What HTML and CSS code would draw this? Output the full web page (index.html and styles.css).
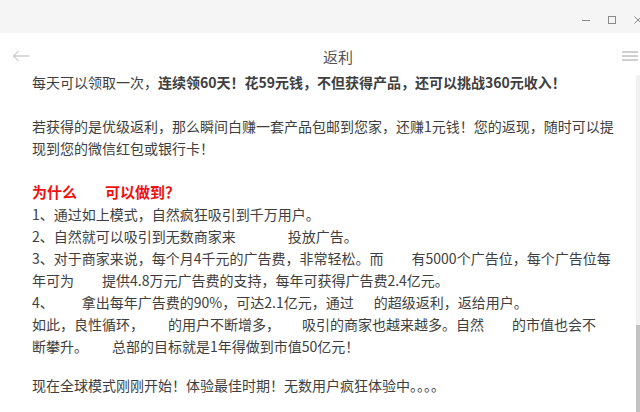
FILE: index.html
```html
<!doctype html>
<html lang="zh-CN">

<head>
  <meta charset="UTF-8" />
  <meta name="viewport" content="width=device-width, initial-scale=1.0" />
  <title>返利</title>
  <link rel="stylesheet" href="styles.css">
</head>

<body>
  <div class="window">
    <div class="titlebar">
      <div class="controls">
        <svg class="ctl" width="10" height="10" viewBox="0 0 10 10"><path d="M1 5.5h8" /></svg>
        <svg class="ctl" width="10" height="10" viewBox="0 0 10 10"><rect x="1.5" y="1.5" width="7" height="7" /></svg>
        <svg class="ctl" width="10" height="10" viewBox="0 0 10 10"><path d="M1.5 1.5l7 7M8.5 1.5l-7 7" /></svg>
      </div>
    </div>

    <div class="navbar">
      <div class="nav-back">
        <svg width="18" height="12" viewBox="0 0 18 12"><path d="M17.5 6H1.5M6.5 1L1.5 6l5 5" /></svg>
      </div>
      <div class="nav-title"> 返利 </div>
      <div class="nav-menu">
        <svg width="16" height="10" viewBox="0 0 16 10"><path d="M0 1h16M0 5h16M0 9h16" /></svg>
      </div>
    </div>

    <div class="main">
      <div class="article">
        <p>每天可以领取一次，<b>连续领60天！花59元钱，不但获得产品，还可以挑战360元收入！</b></p>

        <p>若获得的是优级返利，那么瞬间白赚一套产品包邮到您家，还赚1元钱！您的返现，随时可以提<br />
          现到您的微信红包或银行卡！</p>

        <p>
          <span class="heading">为什么<span class="gap gap-2"></span>可以做到？</span><br />
          1、通过如上模式，自然疯狂吸引到千万用户。<br />
          2、自然就可以吸引到无数商家来<span class="gap gap-4"></span>投放广告。<br />
          3、对于商家来说，每个月4千元的广告费，非常轻松。而<span class="gap gap-2"></span>有5000个广告位，每个广告位每<br />
          年可为<span class="gap gap-2"></span>提供4.8万元广告费的支持，每年可获得广告费2.4亿元。<br />
          4、<span class="gap gap-2"></span>拿出每年广告费的90%，可达2.1亿元，通过<span class="gap gap-1"></span>的超级返利，返给用户。<br />
          如此，良性循环，<span class="gap gap-sm"></span>的用户不断增多，<span class="gap gap-xs"></span>吸引的商家也越来越多。自然<span class="gap gap-2"></span>的市值也会不<br />
          断攀升。<span class="gap gap-sm"></span>总部的目标就是1年得做到市值50亿元！
        </p>

        <p class="tail">现在全球模式刚刚开始！体验最佳时期！无数用户疯狂体验中。。。。</p>
      </div>

      <div class="scrollbar">
        <div class="thumb"></div>
      </div>
    </div>
  </div>
</body>

</html>
```

FILE: styles.css
```css
html,
body {
  margin: 0;
  padding: 0;
  background-color: #FFFFFF;
}

.window {
  width: 640px;
  height: 412px;
  overflow: hidden;
  display: flex;
  flex-direction: column;
  font-family: "Noto Sans CJK SC", "Noto Sans", sans-serif;
}

.titlebar {
  height: 33px;
  flex: none;
  background-color: #F5F5F5;
  display: flex;
  justify-content: flex-end;
}

.controls {
  display: flex;
  gap: 16px;
  padding-top: 15px;
  margin-right: -3px;
}

.ctl path,
.ctl rect {
  fill: none;
  stroke: #8A8A8A;
  stroke-width: 1;
}

.navbar {
  height: 30px;
  flex: none;
  padding-top: 8px;
  display: flex;
  align-items: center;
}

.nav-back {
  padding-left: 12px;
  display: flex;
}

.nav-back path {
  fill: none;
  stroke: #B5B5B5;
  stroke-width: 1;
}

.nav-title {
  flex: 1;
  text-align: center;
  padding-left: 24px;
  font-size: 15px;
  color: #555555;
}

.nav-menu {
  padding-right: 2px;
  display: flex;
}

.nav-menu path {
  fill: none;
  stroke: #A0A0A0;
  stroke-width: 1;
}

.main {
  flex: 1;
  display: flex;
  min-height: 0;
}

.article {
  flex: 1;
  padding: 0 30px 0 32px;
  font-size: 14px;
  line-height: 22px;
  color: #3E3E3E;
  white-space: nowrap;
  overflow: hidden;
}

.article p {
  margin: 0 0 22px 0;
}

.article b {
  font-weight: bold;
}

.article .tail {
  margin-top: -5px;
}

.heading {
  color: #EE1111;
  font-weight: bold;
  font-size: 15px;
}

.gap {
  display: inline-block;
}

.gap-1 {
  width: 20px;
}

.gap-xs {
  width: 22px;
}

.gap-sm {
  width: 24px;
}

.gap-2 {
  width: 28px;
}

.gap-4 {
  width: 52px;
}

.scrollbar {
  width: 4px;
  flex: none;
  margin-top: 4px;
  background-color: #F1F1F1;
  display: flex;
  flex-direction: column;
  justify-content: flex-end;
}

.thumb {
  height: 87px;
  background-color: #C3C3C3;
}
```
